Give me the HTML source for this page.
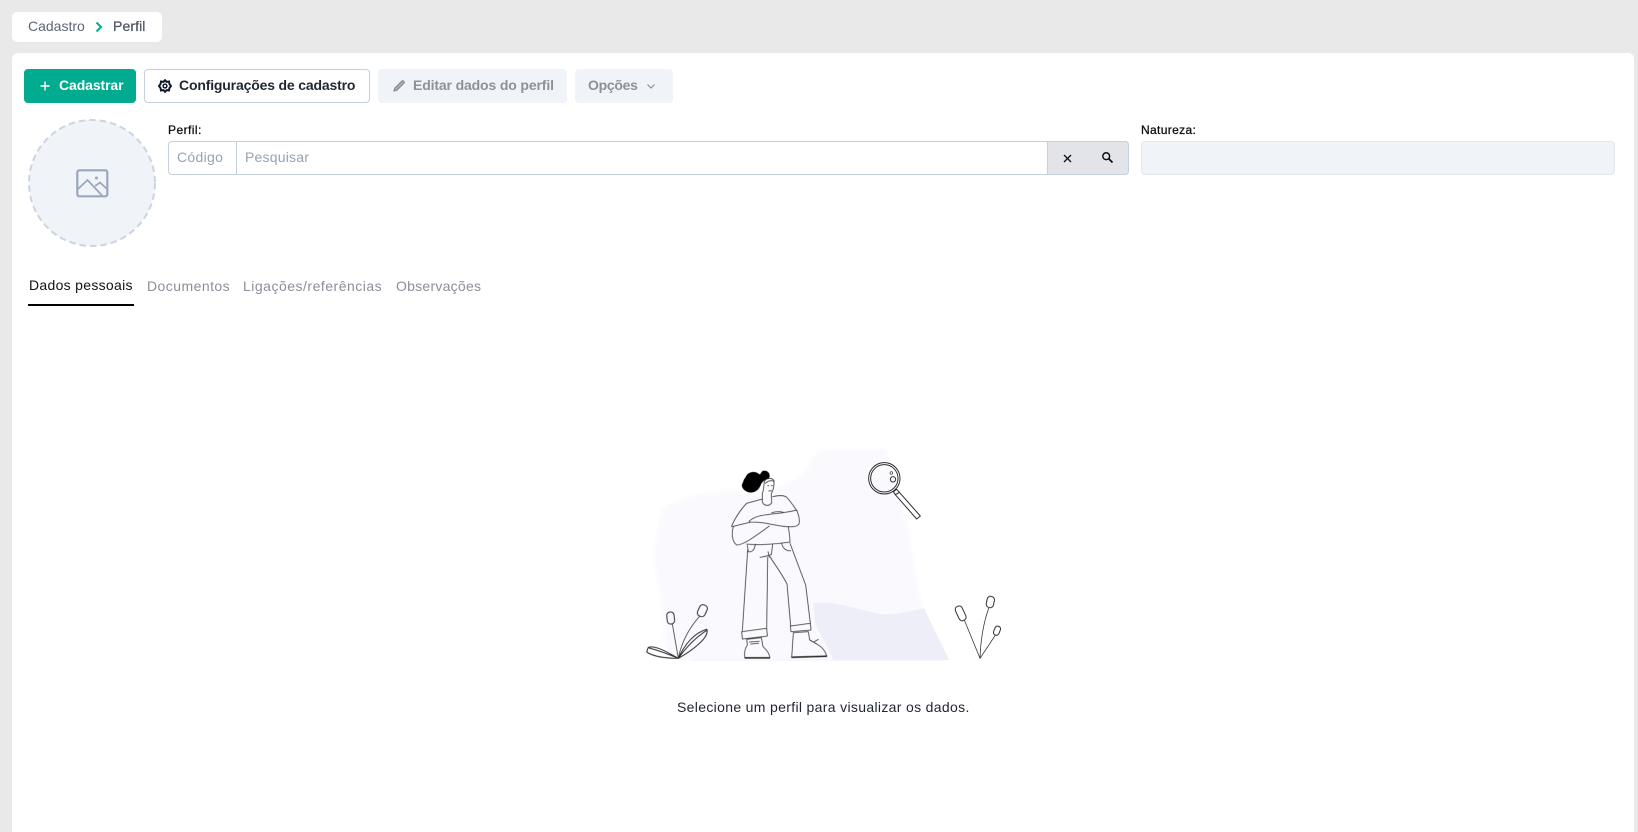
<!DOCTYPE html>
<html lang="pt"><head><meta charset="utf-8"><title>Perfil</title>
<style>
html,body{margin:0;padding:0;width:1638px;height:832px;overflow:hidden;background:#e9e9e9;font-family:"Liberation Sans",sans-serif}
.a{position:absolute;box-sizing:border-box}
.t{position:absolute;white-space:nowrap;line-height:20px;height:20px}
svg{position:absolute;display:block}
</style></head><body>
<div class="a" style="left:12px;top:12px;width:150px;height:30px;background:#fff;border-radius:5px"></div>
<span class="t" style="left:28px;top:16px;font-size:14px;color:#5d6675">Cadastro</span>
<svg style="left:94px;top:21px" width="10" height="12" viewBox="0 0 10 12"><path d="M2.500 1.500L7 6L2.500 10.500" fill="none" stroke="#00ab90" stroke-width="2"/></svg>
<span class="t" style="left:113px;top:16px;font-size:14px;color:#4b5565;-webkit-text-stroke:.25px #4b5565;letter-spacing:.1px">Perfil</span>

<div class="a" style="left:12px;top:53px;width:1622px;height:779px;background:#fff;border-radius:6px 6px 0 0"></div>

<div class="a" style="left:24px;top:69px;width:112px;height:34px;background:#00ab90;border-radius:4px"></div>
<svg style="left:40px;top:81px" width="10" height="10" viewBox="0 0 10 10"><path d="M5 .5V9.500M.5 5H9.500" stroke="#fff" stroke-width="1.400"/></svg>
<span class="t" style="left:59px;top:75px;font-size:14px;font-weight:700;color:#fff;letter-spacing:-.1px">Cadastrar</span>

<div class="a" style="left:144px;top:69px;width:226px;height:34px;background:#fff;border:1px solid #c5cfe0;border-radius:4px"></div>
<svg style="left:158px;top:79px" width="14" height="14" viewBox="0 0 14 14"><path d="M7 1.200L8.600 2.900L11 2.500L11.400 4.900L13 7L11.400 9.100L11 11.500L8.600 11.100L7 12.800L5.400 11.100L3 11.500L2.600 9.100L1 7L2.600 4.900L3 2.500L5.400 2.900Z" fill="none" stroke="#111a2b" stroke-width="2"/><circle cx="7" cy="7" r="1.900" fill="none" stroke="#111a2b" stroke-width="1.500"/></svg>
<span class="t" style="left:179px;top:75px;font-size:14px;font-weight:700;color:#1f2733;letter-spacing:-.17px">Configurações de cadastro</span>

<div class="a" style="left:378px;top:69px;width:189px;height:34px;background:#f0f3f8;border-radius:4px"></div>
<svg style="left:392px;top:79px" width="14" height="14" viewBox="0 0 14 14"><path d="M2 12L2.700 9.200L9.800 2.100C10.400 1.600 11 1.600 11.500 2.100L11.900 2.500C12.400 3 12.400 3.600 11.900 4.200L4.900 11.300Z" fill="#a7adb6" stroke="#858c97" stroke-width="1.100"/></svg>
<span class="t" style="left:413px;top:75px;font-size:14px;font-weight:700;color:#8b929c;letter-spacing:-.14px">Editar dados do perfil</span>

<div class="a" style="left:575px;top:69px;width:98px;height:34px;background:#f0f3f8;border-radius:4px"></div>
<span class="t" style="left:588px;top:75px;font-size:14px;font-weight:700;color:#8b929c;letter-spacing:-.3px">Opções</span>
<svg style="left:646px;top:81px" width="10" height="10" viewBox="0 0 10 10"><path d="M1.500 3.500L5 7L8.500 3.500" fill="none" stroke="#8b929c" stroke-width="1.200"/></svg>

<svg style="left:28px;top:119px" width="128" height="128" viewBox="0 0 128 128"><circle cx="64" cy="64" r="63" fill="#f0f3f8" stroke="#ccd4e2" stroke-width="2" stroke-dasharray="6.500 4"/></svg>
<svg style="left:76px;top:169px" width="33" height="29" viewBox="0 0 33 29"><rect x="1.300" y="1.300" width="30" height="26" rx="2" fill="none" stroke="#9aa8be" stroke-width="2.200"/><path d="M2 20L11.500 11L26 26.500M19 17L24 13.500L31 20" fill="none" stroke="#9aa8be" stroke-width="1.800"/><circle cx="20.500" cy="9" r="1.500" fill="#9aa8be"/></svg>

<span class="t" style="left:168px;top:120px;font-size:12px;color:#111;-webkit-text-stroke:.3px #111;letter-spacing:.45px">Perfil:</span>
<div class="a" style="left:168px;top:141px;width:961px;height:34px;background:#fff;border:1px solid #c5cfe0;border-radius:4px"></div>
<div class="a" style="left:236px;top:141px;width:1px;height:34px;background:#c5cfe0"></div>
<span class="t" style="left:177px;top:147px;font-size:14px;color:#98a2b3;letter-spacing:.3px">Código</span>
<span class="t" style="left:245px;top:147px;font-size:14px;color:#98a2b3;letter-spacing:.2px">Pesquisar</span>
<div class="a" style="left:1047px;top:141px;width:82px;height:34px;background:#e3e4e9;border:1px solid #c5cfe0;border-radius:0 4px 4px 0"></div>
<svg style="left:1062px;top:153px" width="11" height="11" viewBox="0 0 11 11"><path d="M2 2L9 9M9 2L2 9" stroke="#111" stroke-width="1.300"/></svg>
<svg style="left:1101px;top:151px" width="13" height="13" viewBox="0 0 13 13"><circle cx="5.200" cy="5.200" r="3.400" fill="none" stroke="#111" stroke-width="1.500"/><path d="M7.800 7.800L11.500 11.500" stroke="#111" stroke-width="1.800"/></svg>

<span class="t" style="left:1141px;top:120px;font-size:12px;color:#111;-webkit-text-stroke:.3px #111;letter-spacing:.35px">Natureza:</span>
<div class="a" style="left:1141px;top:141px;width:474px;height:34px;background:#f0f3f8;border:1px solid #e2e7ef;border-radius:4px"></div>

<span class="t" style="left:29px;top:275px;font-size:14px;color:#111;letter-spacing:.3px">Dados pessoais</span>
<div class="a" style="left:28px;top:304px;width:106px;height:2px;background:#000"></div>
<span class="t" style="left:147px;top:276px;font-size:14px;color:#8b8f98;letter-spacing:.45px">Documentos</span>
<span class="t" style="left:243px;top:276px;font-size:14px;color:#8b8f98;letter-spacing:.5px">Ligações/referências</span>
<span class="t" style="left:396px;top:276px;font-size:14px;color:#8b8f98;letter-spacing:.25px">Observações</span>

<svg style="left:630px;top:440px" width="380" height="230" viewBox="0 0 1140 690">
<defs><filter id="b" x="-5%" y="-5%" width="110%" height="110%"><feGaussianBlur stdDeviation="5"/></filter><filter id="s" x="-5%" y="-5%" width="110%" height="110%"><feGaussianBlur stdDeviation="0.800"/></filter></defs>
<path filter="url(#b)" d="M100 205C150 170 250 150 320 155C400 160 480 140 530 90C545 60 555 35 580 28L770 28C790 90 810 170 835 270C850 350 860 430 880 505L957 660L180 660C140 660 105 640 100 600C110 520 70 400 75 340C80 280 85 240 100 205Z" fill="#faf9fe"/>
<path d="M550 490C590 480 660 500 740 520C790 530 840 512 882 505L957 660H610C590 610 565 580 555 545Z" fill="#eeeef9" filter="url(#s)"/>
<g filter="url(#s)" fill="none" stroke="#2f2f2f" stroke-width="2.300" stroke-linecap="round" stroke-linejoin="round">
<path fill="#000" stroke="#000" d="M348 112C352 98 372 92 385 102C392 108 392 100 398 94C412 90 422 102 416 114C404 118 398 122 392 132C386 150 372 160 354 155C340 150 332 138 340 127C342 120 344 116 348 112Z"/>
<path fill="#fbfaff" d="M403 124C410 113 426 112 432 122C433 136 430 150 424 160L425 188C418 200 402 198 397 186L397 160C402 150 401 135 403 124Z"/>
<path d="M406 130C414 122 424 120 431 124M416 153L424 152M413 137L417 137M424 137L428 137"/>
<path d="M397 177L350 190C332 208 314 236 305 258M428 170C445 166 460 166 468 170C484 186 492 200 500 212"/>
<path d="M362 240C390 218 440 226 500 210C505 222 510 240 507 252C498 264 470 262 420 252C400 247 380 246 360 246C356 244 358 242 362 240Z"/>
<path d="M305 260L360 247M310 260C304 280 306 305 320 315C342 315 380 285 418 258"/>
<path d="M475 260C478 280 480 295 480 306M350 312C385 316 440 312 480 306M425 218C435 215 450 214 460 217"/>
<path d="M352 316L355 335C365 338 374 330 376 312M455 310C458 325 470 335 482 332"/>
<path d="M353 330L337 572M480 310L527 435L541 550M413 352L410 565M420 350C435 375 455 400 471 432L482 558M390 352C402 350 412 348 424 344L428 312M414 335L418 352"/>
<path d="M335 575L410 565L412 588L337 597Z"/>
<path d="M481 558L541 550L543 570L483 575Z"/>
<path d="M350 598L394 593L399 620C410 630 420 642 419 655H345C342 640 345 625 352 615ZM358 606L388 604M362 612L386 610"/>
<path d="M490 578L535 575L539 600C555 610 585 620 590 650L485 653Z"/>
<path d="M540 600L560 612M553 605L565 598"/>
<path d="M345 653H419M485 651L590 648" stroke-width="3.500" stroke-dasharray="4 2"/>

<path d="M145 655L127 552M145 655C155 600 185 555 208 530"/>
<rect x="111" y="516" width="22" height="36" rx="10" transform="rotate(-6 122 534)" stroke-width="3"/>
<rect x="205" y="494" width="24" height="36" rx="10" transform="rotate(25 217 512)" stroke-width="3"/>
<path d="M145 655C165 610 195 578 230 568C240 590 190 630 145 655ZM145 655C170 620 200 590 232 570" stroke-width="3"/>
<path d="M145 655C110 635 75 615 55 622L50 636C70 650 110 655 145 655ZM145 655C110 640 80 630 58 624" stroke-width="3"/>

<path d="M1050 655L1003 540M1050 655C1052 600 1060 550 1076 505M1050 655L1095 587"/>
<rect x="981" y="497" width="22" height="46" rx="10" transform="rotate(-25 992 520)" stroke-width="3"/>
<rect x="1070" y="469" width="22" height="34" rx="10" transform="rotate(12 1081 486)" stroke-width="3"/>
<rect x="1092.500" y="558" width="17" height="28" rx="8" transform="rotate(22 1101 572)" stroke-width="3"/>

<circle cx="763" cy="115" r="47" stroke-width="3"/>
<circle cx="763" cy="115" r="41" stroke-width="3"/>
<circle cx="789" cy="118" r="8" stroke-width="3"/>
<circle cx="784" cy="99" r="4" stroke-width="2"/>
<path d="M790 155L800 148L808 157L796 164ZM796 164L860 237L871 228L808 157" stroke-width="3"/>
</g>
<path d="M180 660H940" stroke="#f1f1f6" stroke-width="2"/>
</svg>

<span class="t" style="left:677px;top:697px;font-size:14px;color:#1f2430;letter-spacing:.33px">Selecione um perfil para visualizar os dados.</span>
</body></html>
